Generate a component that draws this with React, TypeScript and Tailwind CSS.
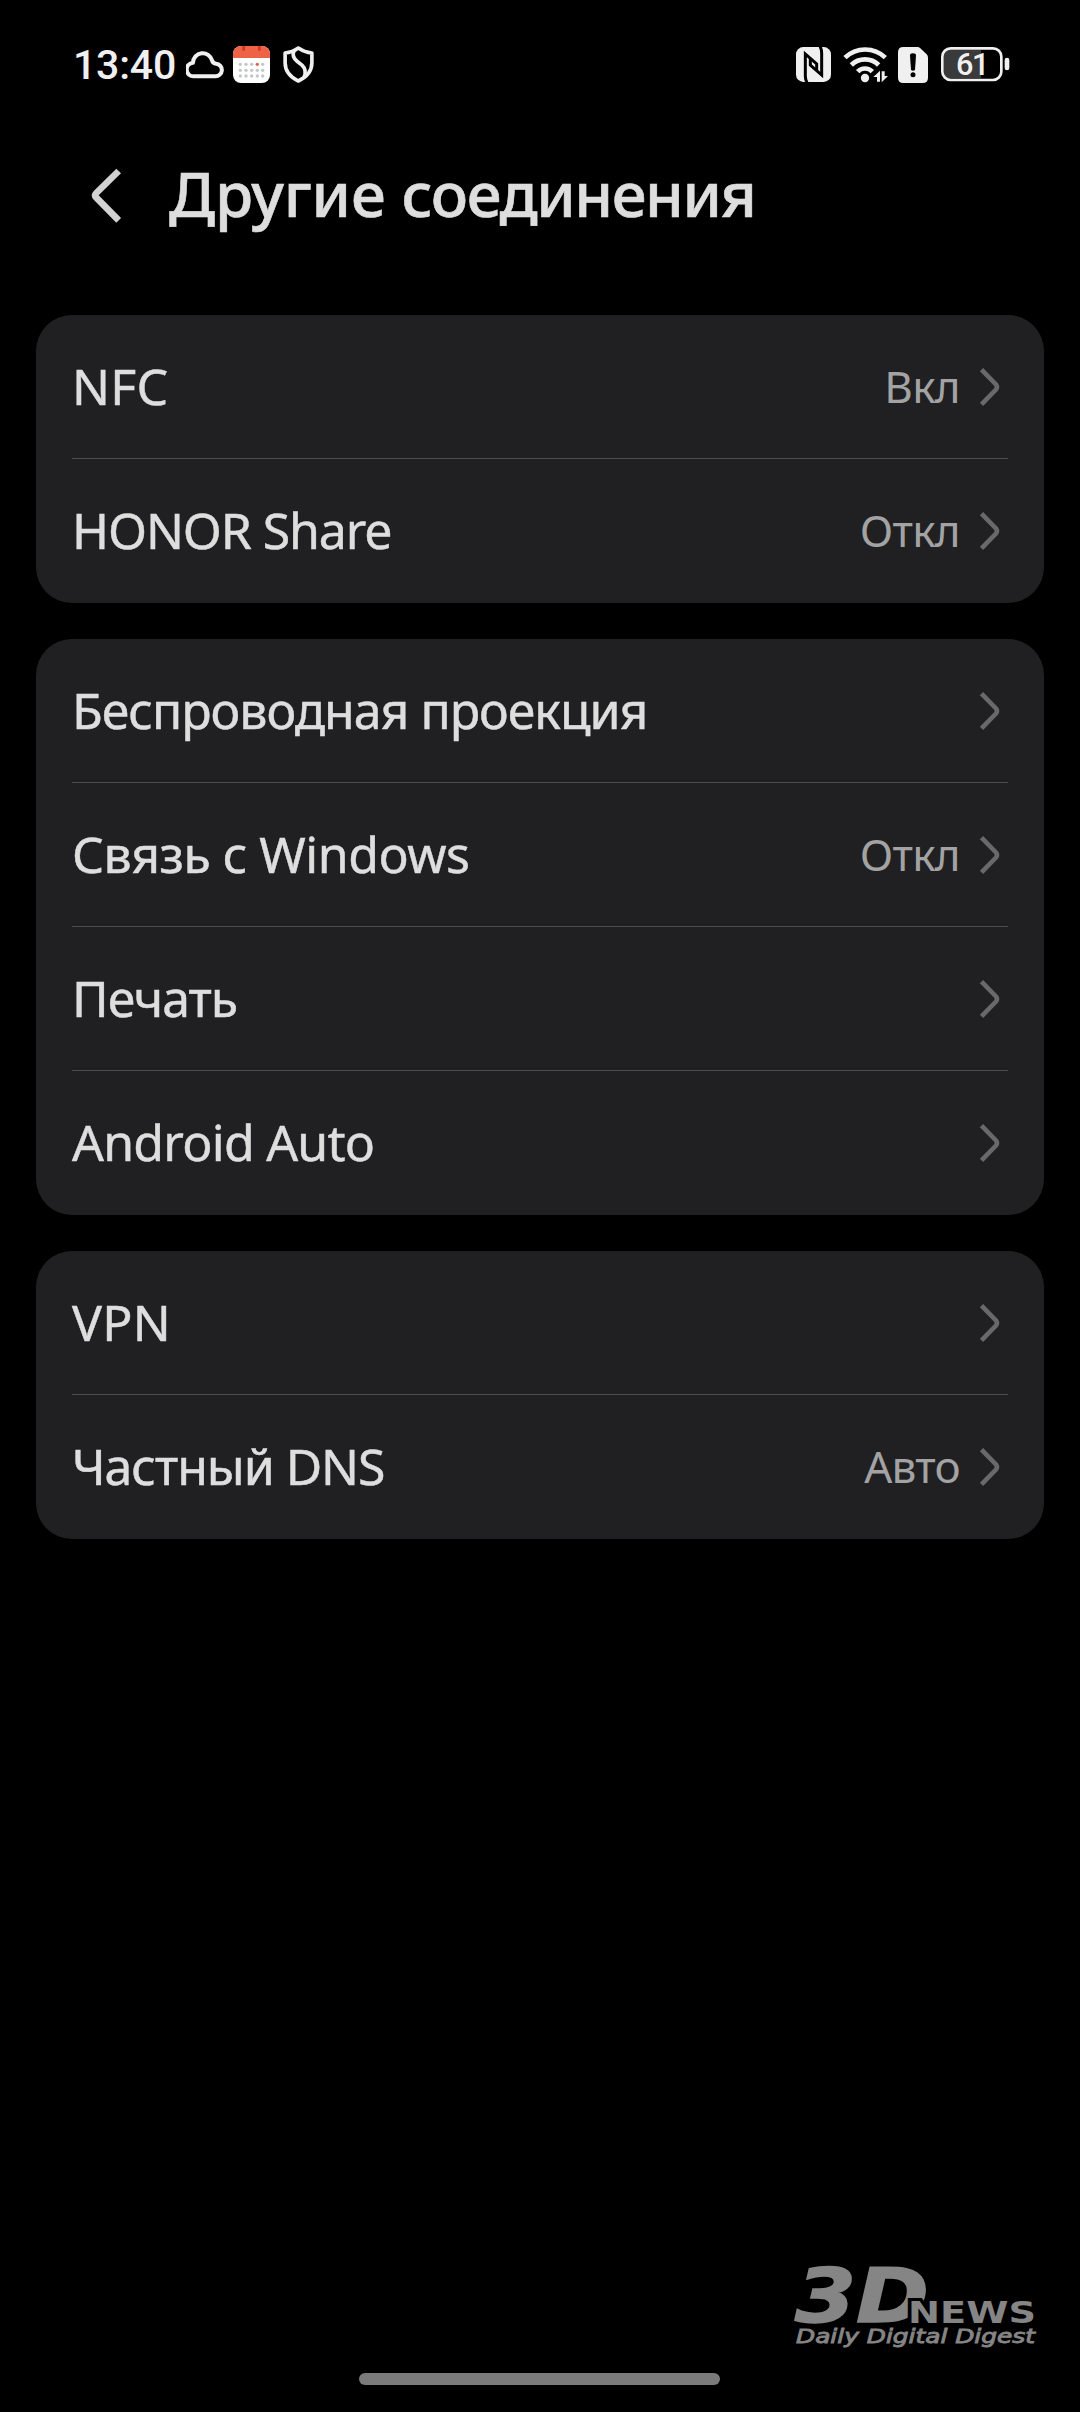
type Item = {
  label: string;
  labelClass?: string;
  value?: string;
};

const groups: Item[][] = [
  [
    { label: "NFC", labelClass: "tracking-[0.3px]", value: "Вкл" },
    { label: "HONOR Share", labelClass: "tracking-[-1.1px]", value: "Откл" },
  ],
  [
    { label: "Беспроводная проекция", labelClass: "tracking-[-1px]" },
    { label: "Связь с Windows", labelClass: "tracking-[-0.5px]", value: "Откл" },
    { label: "Печать", labelClass: "tracking-[-1px]" },
    { label: "Android Auto", labelClass: "tracking-[-0.75px]" },
  ],
  [
    { label: "VPN", labelClass: "tracking-[0.3px]" },
    { label: "Частный DNS", labelClass: "tracking-[-1.05px]", value: "Авто" },
  ],
];

function CloudIcon() {
  return (
    <svg viewBox="378 60 114 87" className="h-[29px] w-[38px]" fill="none" stroke="#f0f0f0" strokeWidth="12">
      <path d="M402 139H465A19 19 0 0 0 468 101A13 13 0 0 1 456 91A29 29 0 0 0 399 98A20.5 20.5 0 0 0 402 139Z" strokeLinejoin="round" />
    </svg>
  );
}

function CalendarIcon() {
  return (
    <svg viewBox="519 48 111 111" className="size-[37px]">
      <rect x="519" y="48" width="111" height="111" rx="24" fill="#fff" />
      <path d="M519 84V72a24 24 0 0 1 24-24h63a24 24 0 0 1 24 24v12z" fill="#ee6246" />
      <path d="M547 48h8v14h-8zM594 48h8v14h-8z" fill="#cf3a25" />
      {[103, 121, 138].map((y) =>
        [541, 558, 575, 592, 608].map((x) => (
          <circle key={`${x}-${y}`} cx={x} cy={y} r="5" fill={x === 592 && y === 103 ? "#dd6446" : "#c3c6ca"} />
        )),
      )}
    </svg>
  );
}

function ShieldIcon() {
  return (
    <svg viewBox="669 47 93 112" className="h-[37px] w-[31px]" fill="none" stroke="#f0f0f0" strokeWidth="11" strokeLinejoin="round">
      <path d="M715 53Q734 66 756 68V98Q756 134 715 153Q675 134 675 98V68Q697 66 715 53Z" />
      <path d="M702 61Q694 80 712 94L726 105Q742 120 732 143" />
    </svg>
  );
}

function NfcIcon() {
  return (
    <svg viewBox="48 51 105 105" className="size-[35px]">
      <rect x="48" y="51" width="105" height="105" rx="22" fill="#f0f0f0" />
      <g fill="none" stroke="#000" strokeWidth="9">
        <path d="M82 160Q76 150 76 138V72L110 102V122" />
        <path d="M119 47Q125 57 125 69V135L91 105V85" />
      </g>
    </svg>
  );
}

function WifiIcon() {
  return (
    <svg viewBox="189 48 135 108" className="h-9 w-[45px]">
      <g fill="none" stroke="#f0f0f0" strokeWidth="14">
        <path d="M195 80A87 87 0 0 1 316 80" />
        <path d="M214 102A58 58 0 0 1 296 102" />
        <path d="M233 122A30 30 0 0 1 277 122" />
      </g>
      <circle cx="255" cy="141" r="12.5" fill="#f0f0f0" />
      <path d="M300 119V152H291V138H280ZM305 154V121H314V135H324Z" fill="#f0f0f0" />
    </svg>
  );
}

function SimAlertIcon() {
  return (
    <svg viewBox="354 48 90 108" className="h-9 w-[30px]">
      <path d="M370 48H412Q417 48 421 52L440 70Q444 74 444 80V140Q444 156 428 156H370Q354 156 354 140V64Q354 48 370 48Z" fill="#f0f0f0" />
      <path d="M390 73Q390 67 399 67Q408 67 408 73L405 117Q399 122 393 117Z" fill="#000" />
      <circle cx="399" cy="131" r="7.5" fill="#000" />
    </svg>
  );
}

function BatteryIcon() {
  return (
    <svg viewBox="483 51 207 105" className="h-[35px] w-[69px]">
      <path d="M603 59V145H510Q491 145 491 124V80Q491 59 510 59Z" fill="#3a3a3a" />
      <rect x="487" y="55" width="177" height="95" rx="25" fill="none" stroke="#f0f0f0" strokeWidth="8" />
      <rect x="674" y="83" width="14" height="38" rx="7" fill="#f0f0f0" />
      <text x="528" y="134" textLength="100" className="fill-[#f0f0f0] font-['Roboto',sans-serif] text-[92px] font-medium">
        61
      </text>
    </svg>
  );
}

function StatusBar() {
  return (
    <div className="flex h-[129px] items-center justify-between pr-[70px] pl-[73px]">
      <div className="flex items-center">
        <span className="w-[113px] pt-0.5 font-['Roboto',sans-serif] text-[41px] leading-none font-medium tracking-[-0.2px] text-[#f0f0f0]">
          13:40
        </span>
        <CloudIcon />
        <span className="w-[9px]" />
        <CalendarIcon />
        <span className="w-[13px]" />
        <ShieldIcon />
      </div>
      <div className="flex items-center">
        <NfcIcon />
        <span className="w-3" />
        <WifiIcon />
        <span className="w-2.5" />
        <SimAlertIcon />
        <span className="w-[13px]" />
        <BatteryIcon />
      </div>
    </div>
  );
}

function Row({ label, labelClass, value }: Item) {
  return (
    <div className="flex h-36 items-center border-b border-[#4d4d4f] last:border-transparent">
      <span className={`flex-1 text-[50px] text-[#dedede] [-webkit-text-stroke:0.5px_#dedede] ${labelClass ?? ""}`}>
        {label}
      </span>
      {value && <span className="mr-5 pb-0.5 text-[44px] tracking-[-0.7px] text-[#a3a3a4]">{value}</span>}
      <svg viewBox="0 0 20 38" className="mr-2 h-[38px] w-5 overflow-visible" fill="none" stroke="#69696b" strokeWidth="4.6">
        <path d="M1.5 1.7L16 16.5Q18 19 16 21.5L1.5 36.3" />
      </svg>
    </div>
  );
}

function Watermark() {
  return (
    <svg viewBox="790 2242 250 110" className="mr-10 h-[110px] w-[250px] self-end" fill="#858585">
      <g className="font-['DejaVu_Sans',sans-serif]">
        <text x="795" y="2322" textLength="134" lengthAdjust="spacingAndGlyphs" stroke="#858585" strokeWidth="1.5" className="text-[75px] font-bold italic">
          3D
        </text>
        <text x="908" y="2323" textLength="128" lengthAdjust="spacingAndGlyphs" stroke="#000" strokeWidth="6" paintOrder="stroke" className="text-[31px] font-bold">
          NEWS
        </text>
        <text x="796" y="2342.5" textLength="239" lengthAdjust="spacingAndGlyphs" stroke="#858585" strokeWidth="0.9" className="text-[19.5px] italic">
          Daily Digital Digest
        </text>
      </g>
    </svg>
  );
}

export default function App() {
  return (
    <div className="flex h-[2412px] w-[1080px] flex-col bg-black font-['Noto_Sans',sans-serif]">
      <StatusBar />

      <header className="mb-[54px] flex h-[132px] items-center pl-[91px]">
        <svg viewBox="63 54 93 165" className="h-[55px] w-[31px]" fill="none" stroke="#d2d2d2" strokeWidth="20">
          <path d="M146 63L79 129Q72 136 79 143L146 211" />
        </svg>
        <h1 className="ml-[47px] pb-1 text-[62px] leading-none font-medium tracking-[-1.4px] text-[#dedede] [-webkit-text-stroke:0.6px_#dedede]">
          <span className="tracking-[-0.1px]">Другие </span>
          соединения
        </h1>
      </header>

      <main className="flex flex-col gap-9 px-9">
        {groups.map((items) => (
          <section key={items[0].label} className="rounded-[36px] bg-[#202022] px-9">
            {items.map((item) => (
              <Row key={item.label} {...item} />
            ))}
          </section>
        ))}
      </main>

      <footer className="mt-auto flex flex-col items-center gap-[21px] pb-[27px]">
        <Watermark />
        <div className="mr-px h-3 w-[361px] rounded-full bg-[#7b7b7b]" />
      </footer>
    </div>
  );
}
